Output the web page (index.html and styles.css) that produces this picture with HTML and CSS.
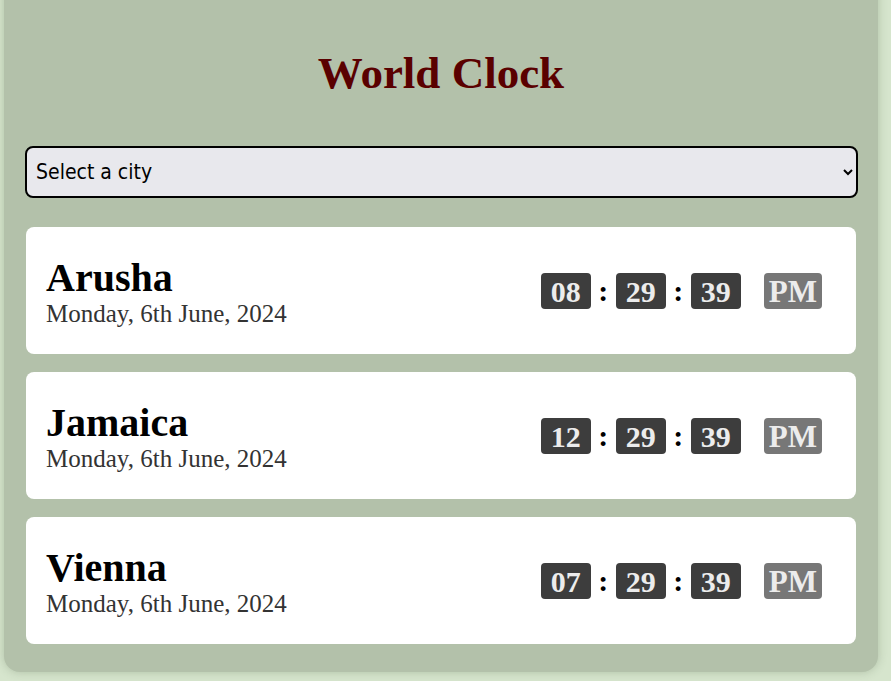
FILE: index.html
```html
<!DOCTYPE html>
<html lang="en">
<head>
<meta charset="utf-8">
<title>World Clock</title>
<link rel="stylesheet" href="styles.css">
</head>
<body>
<div class="app">
  <h1 class="title">World Clock</h1>
  <select class="city-select">
    <option>Select a city</option>
    <option>Arusha</option>
    <option>Jamaica</option>
    <option>Vienna</option>
  </select>
  <div class="cities">
    <div class="card">
      <div class="info">
        <div class="name">Arusha</div>
        <div class="date">Monday, 6th June, 2024</div>
      </div>
      <div class="time">
        <span class="num">08</span><span class="sep">:</span><span class="num">29</span><span class="sep">:</span><span class="num">39</span><span class="ampm">PM</span>
      </div>
    </div>
    <div class="card">
      <div class="info">
        <div class="name">Jamaica</div>
        <div class="date">Monday, 6th June, 2024</div>
      </div>
      <div class="time">
        <span class="num">12</span><span class="sep">:</span><span class="num">29</span><span class="sep">:</span><span class="num">39</span><span class="ampm">PM</span>
      </div>
    </div>
    <div class="card">
      <div class="info">
        <div class="name">Vienna</div>
        <div class="date">Monday, 6th June, 2024</div>
      </div>
      <div class="time">
        <span class="num">07</span><span class="sep">:</span><span class="num">29</span><span class="sep">:</span><span class="num">39</span><span class="ampm">PM</span>
      </div>
    </div>
  </div>
</div>
</body>
</html>
```
FILE: styles.css
```css
html, body {
  margin: 0;
  padding: 0;
}
body {
  background: #d6e5cd;
  font-family: "Liberation Serif", "Times New Roman", serif;
  overflow: hidden;
  height: 681px;
}
.app {
  background: #b3c1aa;
  margin: -20px 13px 0 4px;
  padding: 67px 22px 28px;
  border-radius: 16px;
  box-shadow: 0 0 10px rgba(60, 80, 50, 0.25);
}
.title {
  margin: 0 0 46px;
  text-align: center;
  font-size: 45px;
  font-weight: bold;
  color: #5a0000;
  line-height: 53px;
  height: 53px;
}
.city-select {
  display: block;
  box-sizing: border-box;
  width: 833px;
  height: 52px;
  margin: 0 0 29px -1px;
  padding: 0 11px 0 5px;
  border: 2px solid #000;
  border-radius: 8px;
  background-color: #e8e8ed;
  color: #000;
  font-family: "DejaVu Sans Condensed", "DejaVu Sans", Tahoma, sans-serif;
  font-size: 21px;
}
.cities {
  display: flex;
  flex-direction: column;
  gap: 18px;
}
.card {
  background: #fff;
  border-radius: 8px;
  height: 127px;
  box-sizing: border-box;
  padding: 0 34px 0 20px;
  display: flex;
  align-items: center;
  justify-content: space-between;
}
.info {
  display: flex;
  flex-direction: column;
  padding-top: 2px;
}
.name {
  font-size: 40px;
  font-weight: bold;
  color: #000;
  line-height: 44px;
}
.date {
  font-size: 25px;
  color: #333;
  line-height: 28px;
}
.time {
  display: flex;
  align-items: center;
  font-weight: bold;
  font-size: 30px;
}
.num, .ampm {
  display: inline-block;
  height: 36px;
  line-height: 37px;
  border-radius: 4px;
  color: #ececec;
  text-align: center;
}
.num {
  width: 50px;
  background: #3d3d3d;
}
.ampm {
  background: #777;
  padding: 0 5px;
  margin-left: 23px;
  font-size: 31px;
}
.sep {
  width: 25px;
  text-align: center;
  color: #000;
  line-height: 36px;
}
```
